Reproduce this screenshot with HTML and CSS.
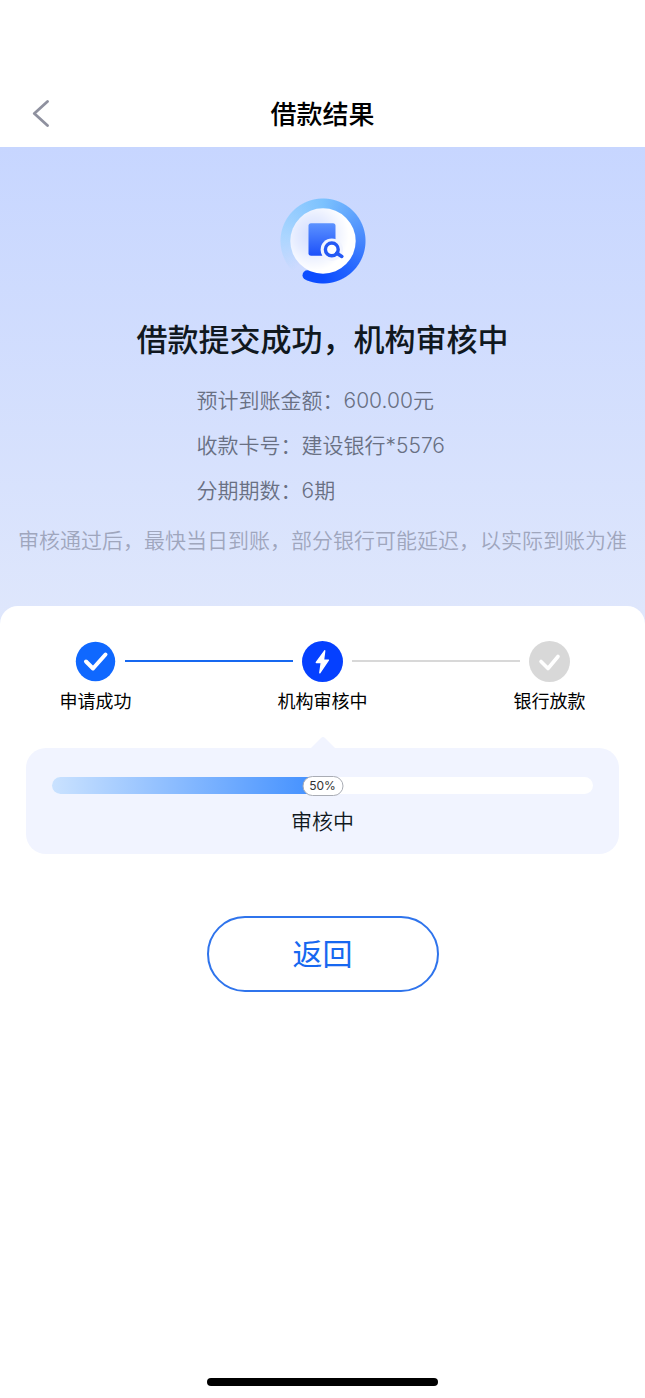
FILE: index.html
```
<!DOCTYPE html>
<html lang="zh-CN">
<head>
<meta charset="utf-8">
<meta name="viewport" content="width=device-width, initial-scale=1">
<title>借款结果</title>
<link rel="stylesheet" href="styles.css">
</head>
<body>
<div class="page">
  <header class="topbar">
    <button class="back" type="button" aria-label="返回上一页">
      <svg width="18" height="28" viewBox="0 0 18 28" fill="none" stroke="#8f919f" stroke-width="2.8" stroke-linecap="round" stroke-linejoin="round"><path d="M15.500 1.500 2.300 13.500l13.200 12"/></svg>
    </button>
    <h1 class="title">借款结果</h1>
  </header>

  <main class="main">
    <section class="hero">
      <div class="badge" aria-hidden="true">
        <div class="ring"></div>
        <svg class="badge-art" width="88" height="88" viewBox="0 0 88 88">
          <defs>
            <radialGradient id="disc" cx="34" cy="38" r="36" gradientUnits="userSpaceOnUse">
              <stop offset="0" stop-color="#d3ddff"/><stop offset=".5" stop-color="#e6ecff"/><stop offset="1" stop-color="#fff"/>
            </radialGradient>
            <linearGradient id="doc" x1="0" y1="0" x2="0" y2="1">
              <stop offset="0" stop-color="#5c92ff"/><stop offset="1" stop-color="#1c50fa"/>
            </linearGradient>
          </defs>
          <circle cx="28.500" cy="78.300" r="5" fill="#0d4dff"/>
          <circle cx="44" cy="44" r="32.700" fill="url(#disc)"/>
          <rect x="29.500" y="26.300" width="27" height="32.500" rx="2.500" fill="url(#doc)"/>
          <circle cx="52.800" cy="52.700" r="11.200" fill="#f1f4ff"/>
          <circle cx="52.800" cy="52.400" r="6.400" fill="#fff" stroke="#2459f5" stroke-width="3.400"/>
          <path d="m57.800 56.200 5 3.200" stroke="#2459f5" stroke-width="3.600" stroke-linecap="round"/>
        </svg>
      </div>
      <h2 class="headline">借款提交成功，机构审核中</h2>
      <ul class="details">
        <li>预计到账金额：600.00元</li>
        <li>收款卡号：建设银行*5576</li>
        <li>分期期数：6期</li>
      </ul>
      <p class="note">审核通过后，最快当日到账，部分银行可能延迟，以实际到账为准</p>
    </section>

    <section class="sheet">
      <div class="steps">
        <div class="step">
          <svg width="41" height="41" viewBox="0 0 41 41"><circle cx="20.500" cy="20.500" r="19.700" fill="#0f68ff"/><path d="m11 20.500 7 7L30.500 13.500" fill="none" stroke="#fff" stroke-width="4" stroke-linecap="round" stroke-linejoin="round"/></svg>
          <span>申请成功</span>
        </div>
        <div class="line line-done"></div>
        <div class="step">
          <svg width="41" height="41" viewBox="0 0 41 41"><circle cx="20.500" cy="20.500" r="20.500" fill="#0540ff"/><path d="M22.700 9.800 14.300 21.500h5l-1.500 10.300 8.600-12.600h-4.900z" fill="#fff" stroke="#fff" stroke-width="1.400" stroke-linejoin="round"/></svg>
          <span>机构审核中</span>
        </div>
        <div class="line"></div>
        <div class="step">
          <svg width="41" height="41" viewBox="0 0 41 41"><circle cx="20.500" cy="20.500" r="20.500" fill="#d8d8d8"/><path d="m12 20.500 7 7L29 15.500" fill="none" stroke="#fff" stroke-width="3.600" stroke-linecap="round" stroke-linejoin="round"/></svg>
          <span>银行放款</span>
        </div>
      </div>

      <div class="panel">
        <svg class="pointer" width="24" height="12" viewBox="0 0 24 12" aria-hidden="true"><path d="M0 12 10 2q2-2 4 0L24 12z" fill="#f1f4ff"/></svg>
        <div class="track" role="progressbar" aria-valuenow="50" aria-valuemin="0" aria-valuemax="100" aria-label="审核中">
          <div class="fill" style="width:50%"></div>
          <span class="percent" style="left:50%">50%</span>
        </div>
        <p class="status">审核中</p>
      </div>

      <button class="return" type="button">返回</button>
    </section>
  </main>
  <div class="home-indicator"></div>
</div>
</body>
</html>
```
FILE: styles.css
```
* {
  box-sizing: border-box;
}

body {
  margin: 0;
  background: #fff;
  color: #101820;
  font-family: Inter, "Noto Sans CJK SC", sans-serif;
}

h1, h2, p, ul {
  margin: 0;
  padding: 0;
}

button {
  font-family: inherit;
  cursor: pointer;
}

.page {
  display: flex;
  flex-direction: column;
  min-height: 100vh;
}

.topbar {
  display: grid;
  grid-template-columns: 64px 1fr 64px;
  align-items: center;
  height: 147px;
  padding-top: 80px;
}

.back {
  display: flex;
  justify-content: flex-end;
  padding: 0 14px 0 0;
  border: 0;
  background: none;
}

.title {
  padding-top: 2px;
  color: #000;
  font-size: 26px;
  font-weight: 500;
  line-height: 36px;
  text-align: center;
}

.main {
  display: flex;
  flex: 1;
  flex-direction: column;
}

.hero {
  display: flex;
  flex-direction: column;
  align-items: center;
  padding: 50px 0 70px;
  background: linear-gradient(#c7d6ff, #dfe7fc);
}

.badge {
  display: grid;
  width: 88px;
  height: 88px;
}

.ring,
.badge-art {
  grid-area: 1 / 1;
}

.badge-art {
  z-index: 1;
}

.ring {
  border-radius: 50%;
  background: conic-gradient(#7cc2fe 0deg, #62a6fd 45deg, #4686fd 90deg, #2465ff 135deg, #0d4dff 180deg, #0d4dff 203deg, transparent 203deg, transparent 225deg, #a9d5ff 280deg, #7cc2fe 360deg);
  mask: radial-gradient(circle, #000 42px, transparent 43px);
}

.headline {
  margin-top: 33px;
  font-size: 31px;
  font-weight: 500;
  line-height: 44px;
}

.details {
  width: 252px;
  margin-top: 16px;
  color: #697083;
  font-size: 21px;
  font-weight: 350;
  line-height: 45px;
  list-style: none;
  white-space: nowrap;
}

.note {
  margin-top: 12px;
  color: #9fa6bd;
  font-size: 21px;
  font-weight: 350;
  line-height: 32px;
}

.sheet {
  display: flex;
  flex: 1;
  flex-direction: column;
  align-items: center;
  margin-top: -21px;
  padding: 35px 26px 0;
  border-radius: 18px 18px 0 0;
  background: #fff;
}

.steps {
  display: flex;
  align-self: stretch;
  gap: 9px;
  padding: 0 49px;
}

.step {
  display: flex;
  flex-direction: column;
  align-items: center;
  gap: 7px;
  width: 41px;
  color: #000;
  font-size: 18px;
  line-height: 26px;
  white-space: nowrap;
}

.step svg {
  flex: none;
}

.line {
  flex: 1;
  height: 2px;
  margin-top: 19px;
  background: #d8d8d8;
}

.line-done {
  background: #1768f0;
}

.panel {
  position: relative;
  align-self: stretch;
  margin-top: 33px;
  padding: 29px 26px 16px;
  border-radius: 20px;
  background: #f1f4ff;
}

.pointer {
  position: absolute;
  bottom: 100%;
  left: 50%;
  transform: translateX(-50%);
}

.track {
  position: relative;
  height: 17px;
  border-radius: 9px;
  background: #fff;
}

.fill {
  height: 100%;
  border-radius: 9px 0 0 9px;
  background: linear-gradient(90deg, #cae2ff, #3f8eff);
}

.percent {
  position: absolute;
  top: 50%;
  width: 41px;
  border: 1px solid #a9acb4;
  border-radius: 10px;
  background: #fff;
  color: #333;
  font-size: 12px;
  line-height: 18px;
  text-align: center;
  transform: translate(-50%, -50%);
}

.status {
  margin-top: 12px;
  font-size: 21px;
  font-weight: 350;
  line-height: 32px;
  text-align: center;
}

.return {
  width: 232px;
  height: 76px;
  margin-top: 62px;
  padding: 0 0 4px;
  border: 2px solid #2f74ec;
  border-radius: 38px;
  background: #fff;
  color: #1768f0;
  font-size: 30px;
}

.home-indicator {
  width: 231px;
  height: 8px;
  margin: 0 auto 12px;
  border-radius: 4px;
  background: #000;
}
```
